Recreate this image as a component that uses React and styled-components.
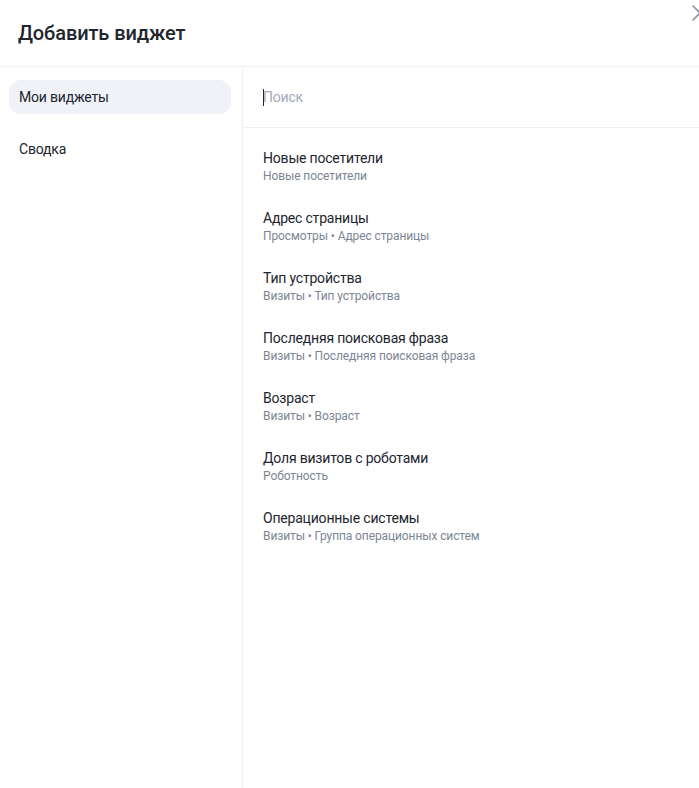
import styled, { createGlobalStyle } from "styled-components";

const GlobalStyle = createGlobalStyle`
    html, body {
        margin: 0;
        padding: 0;
        background: #ffffff;
    }
    body {
        font-family: Roboto, "Noto Sans", Arial, sans-serif;
        color: #21252e;
    }
`;

const WIDGETS = [
    { title: "Новые посетители", sub: "Новые посетители" },
    { title: "Адрес страницы", sub: "Просмотры • Адрес страницы" },
    { title: "Тип устройства", sub: "Визиты • Тип устройства" },
    { title: "Последняя поисковая фраза", sub: "Визиты • Последняя поисковая фраза" },
    { title: "Возраст", sub: "Визиты • Возраст" },
    { title: "Доля визитов с роботами", sub: "Роботность" },
    { title: "Операционные системы", sub: "Визиты • Группа операционных систем" },
];

const MENU = ["Мои виджеты", "Сводка"];

export default function App() {
    return (
        <>
            <GlobalStyle />
            <Modal>
                <Header>
                    <Title>Добавить виджет</Title>
                    <CloseButton aria-label="Закрыть">
                        <svg width="16" height="16" viewBox="0 0 16 16">
                            <path d="M1 1 L15 15 M15 1 L1 15" stroke="#8a93a3" strokeWidth="1.6" fill="none" strokeLinecap="round" />
                        </svg>
                    </CloseButton>
                </Header>
                <Body>
                    <Sidebar>
                        {MENU.map((item, i) => (
                            <MenuItem key={item} $active={i === 0}>{item}</MenuItem>
                        ))}
                    </Sidebar>
                    <Content>
                        <SearchRow>
                            <Caret />
                            <SearchInput placeholder="Поиск" />
                        </SearchRow>
                        <List>
                            {WIDGETS.map((w) => (
                                <Item key={w.title}>
                                    <ItemTitle>{w.title}</ItemTitle>
                                    <ItemSub>{w.sub}</ItemSub>
                                </Item>
                            ))}
                        </List>
                    </Content>
                </Body>
            </Modal>
        </>
    );
}

const Modal = styled.div`
    width: 699px;
    height: 788px;
    display: flex;
    flex-direction: column;
    position: relative;
    overflow: hidden;
    background: #fff;
`;

const Header = styled.header`
    height: 66px;
    flex: none;
    display: flex;
    align-items: center;
    padding: 0 18px;
    border-bottom: 1px solid #eef0f3;
`;

const Title = styled.h1`
    margin: 0;
    font-size: 20px;
    font-weight: 500;
    letter-spacing: -0.1px;
    color: #21252e;
`;

const CloseButton = styled.button`
    position: absolute;
    top: 5px;
    right: -9px;
    width: 16px;
    height: 16px;
    padding: 0;
    border: 0;
    background: none;
    cursor: pointer;
`;

const Body = styled.div`
    flex: 1;
    display: flex;
    min-height: 0;
`;

const Sidebar = styled.nav`
    width: 243px;
    flex: none;
    box-sizing: border-box;
    padding: 13px 11px 0 9px;
    border-right: 1px solid #eef0f3;
    display: flex;
    flex-direction: column;
    gap: 18px;
`;

const MenuItem = styled.div`
    height: 34px;
    display: flex;
    align-items: center;
    padding: 0 10px;
    border-radius: 12px;
    font-size: 14px;
    letter-spacing: -0.2px;
    color: #21252e;
    background: ${(p) => (p.$active ? "#f0f2f7" : "transparent")};
`;

const Content = styled.main`
    flex: 1;
    display: flex;
    flex-direction: column;
`;

const SearchRow = styled.div`
    height: 60px;
    flex: none;
    display: flex;
    align-items: center;
    padding: 0 20px;
    border-bottom: 1px solid #eef0f3;
    position: relative;
`;

const Caret = styled.span`
    position: absolute;
    left: 20px;
    top: 22px;
    width: 1px;
    height: 17px;
    background: #21252e;
`;

const SearchInput = styled.input`
    border: 0;
    outline: none;
    padding: 0;
    width: 100%;
    font-family: inherit;
    font-size: 14px;
    letter-spacing: -0.2px;
    color: #21252e;
    background: transparent;
    &::placeholder {
        color: #a3abb8;
    }
`;

const List = styled.div`
    display: flex;
    flex-direction: column;
    padding: 21px 20px 0;
`;

const Item = styled.div`
    height: 60px;
    display: flex;
    flex-direction: column;
`;

const ItemTitle = styled.div`
    font-size: 14px;
    line-height: 19px;
    letter-spacing: -0.2px;
    color: #21252e;
`;

const ItemSub = styled.div`
    font-size: 12px;
    line-height: 16px;
    letter-spacing: -0.1px;
    color: #7d8594;
`;
